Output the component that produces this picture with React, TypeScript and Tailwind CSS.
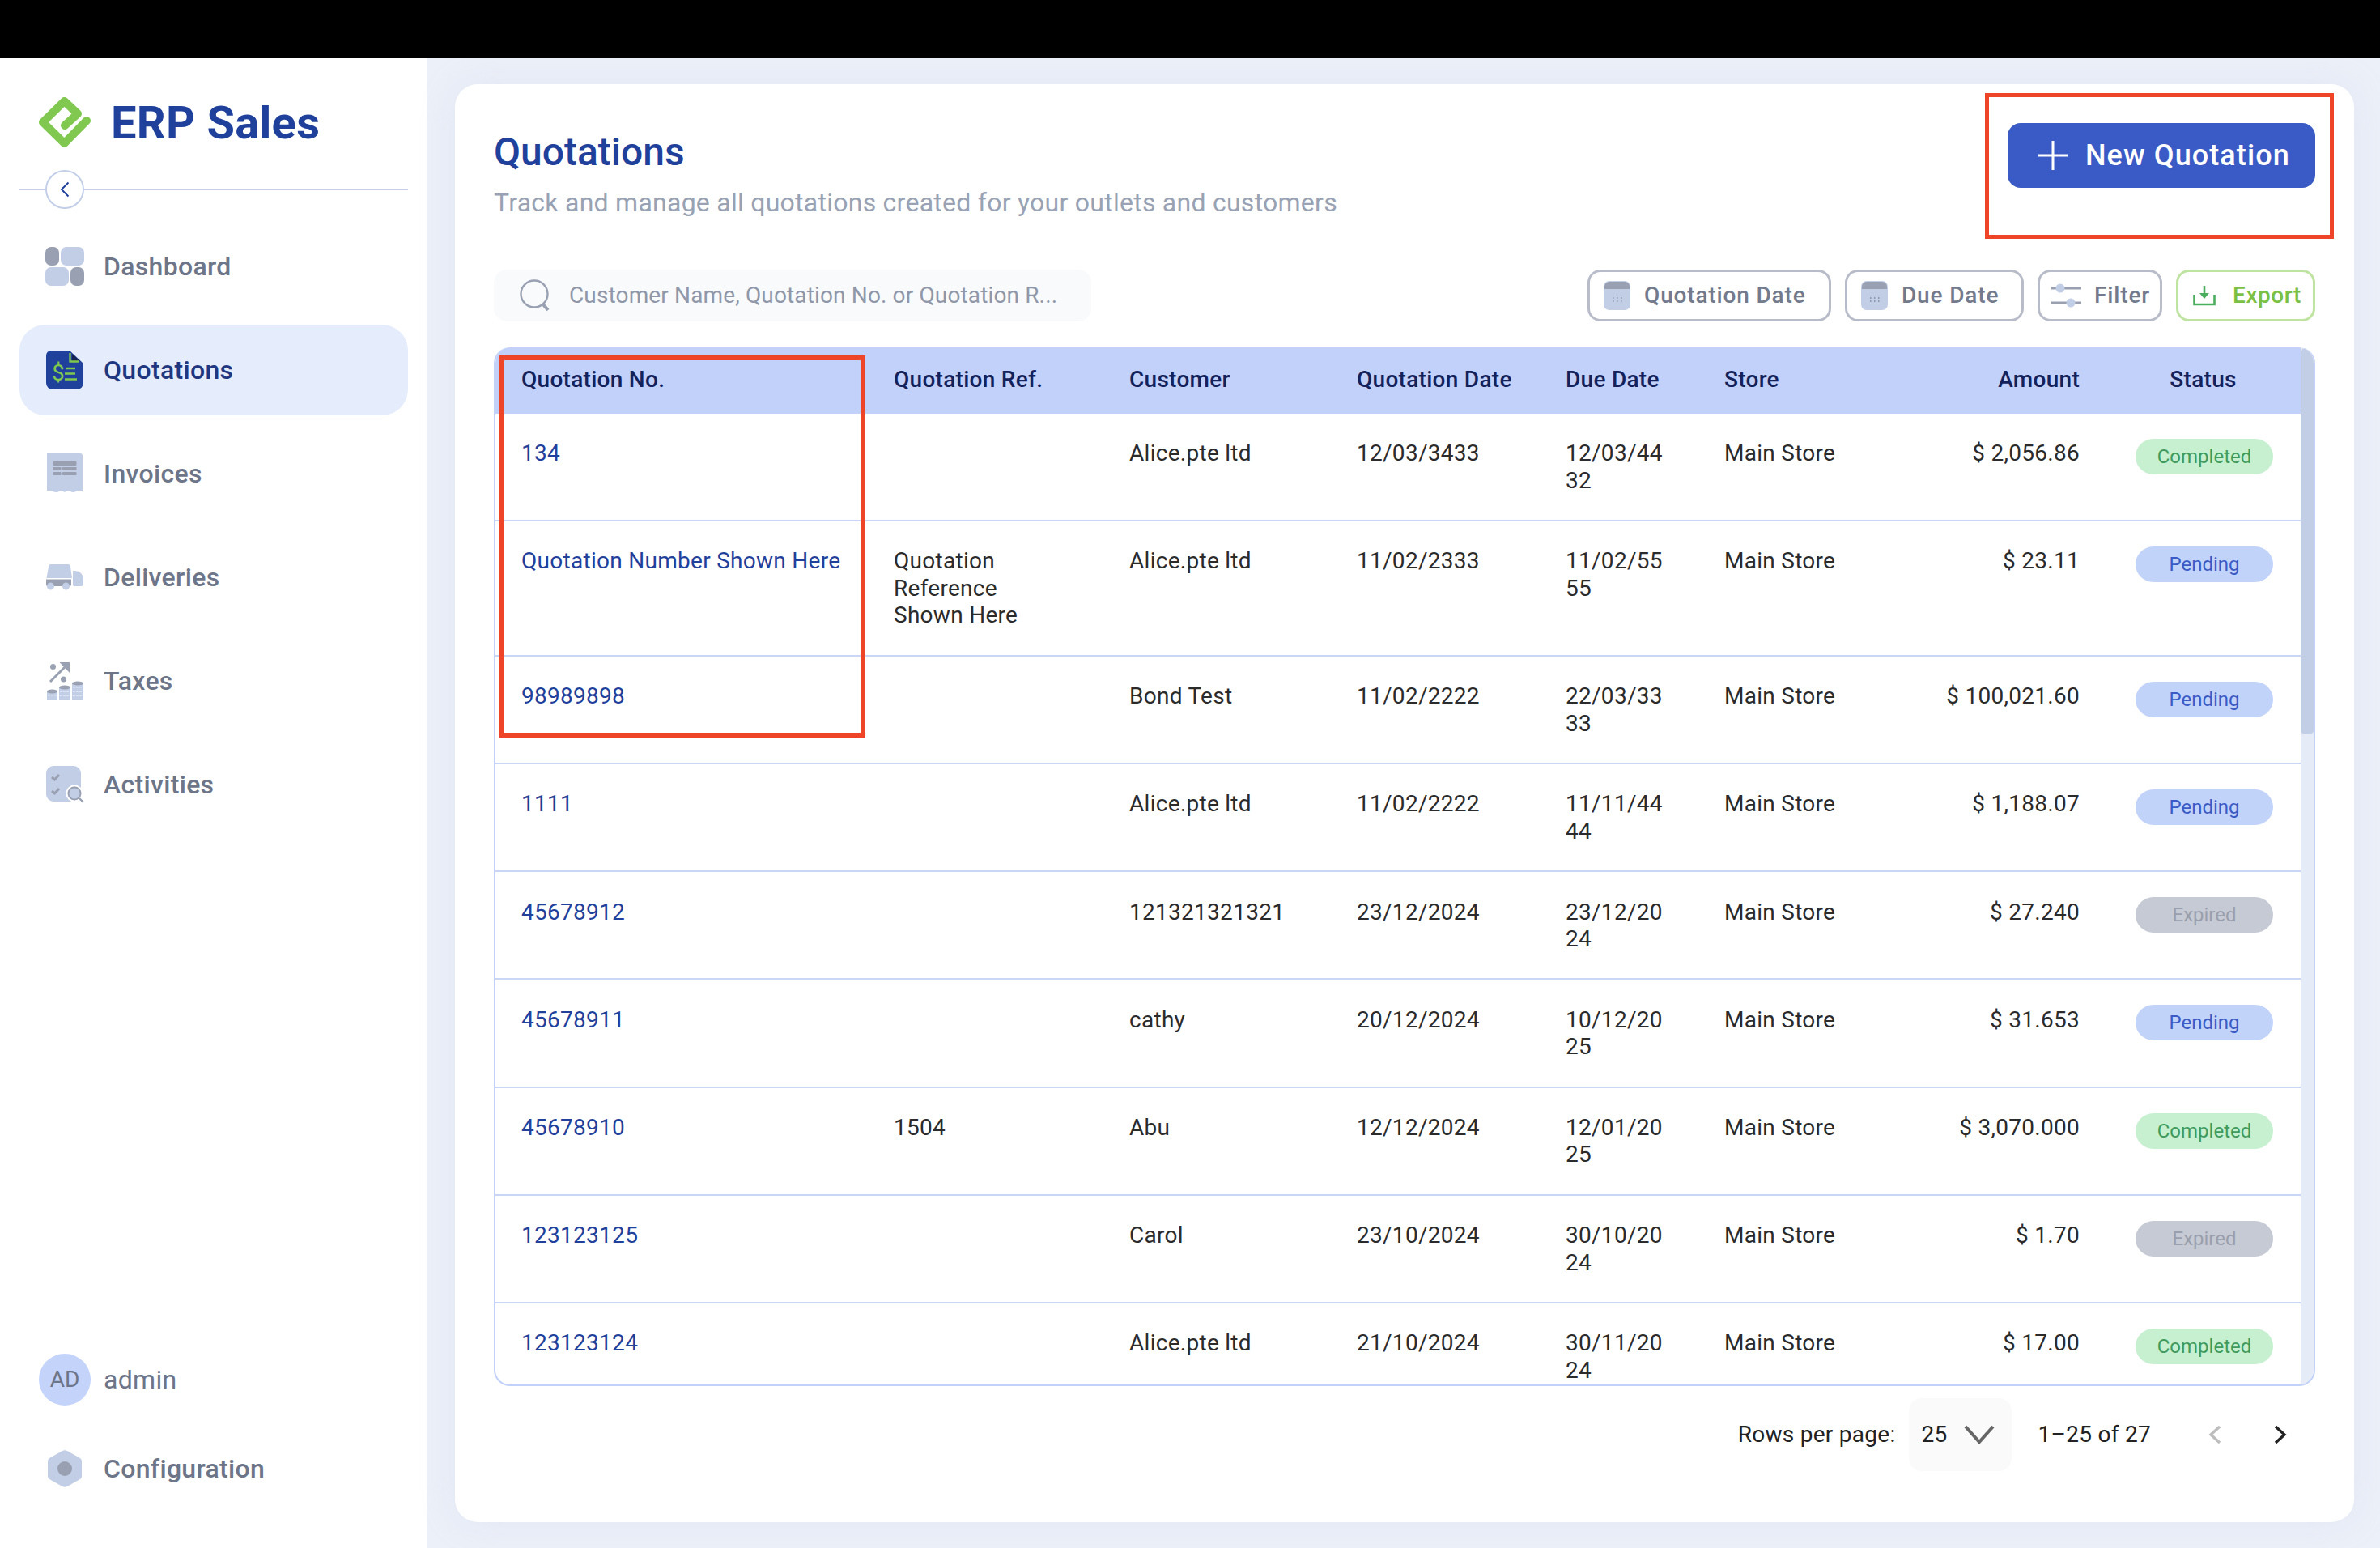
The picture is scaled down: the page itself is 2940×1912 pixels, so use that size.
// Quotations list page - ERP Sales
import type { ReactNode } from "react";

type Status = "Completed" | "Pending" | "Expired";

type Row = {
  no: string;
  ref: string;
  customer: string;
  date: string;
  due: string;
  store: string;
  amount: string;
  status: Status;
};

const rows: Row[] = [
  { no: "134", ref: "", customer: "Alice.pte ltd", date: "12/03/3433", due: "12/03/4432", store: "Main Store", amount: "$ 2,056.86", status: "Completed" },
  { no: "Quotation Number Shown Here", ref: "Quotation Reference Shown Here", customer: "Alice.pte ltd", date: "11/02/2333", due: "11/02/5555", store: "Main Store", amount: "$ 23.11", status: "Pending" },
  { no: "98989898", ref: "", customer: "Bond Test", date: "11/02/2222", due: "22/03/3333", store: "Main Store", amount: "$ 100,021.60", status: "Pending" },
  { no: "1111", ref: "", customer: "Alice.pte ltd", date: "11/02/2222", due: "11/11/4444", store: "Main Store", amount: "$ 1,188.07", status: "Pending" },
  { no: "45678912", ref: "", customer: "121321321321", date: "23/12/2024", due: "23/12/2024", store: "Main Store", amount: "$ 27.240", status: "Expired" },
  { no: "45678911", ref: "", customer: "cathy", date: "20/12/2024", due: "10/12/2025", store: "Main Store", amount: "$ 31.653", status: "Pending" },
  { no: "45678910", ref: "1504", customer: "Abu", date: "12/12/2024", due: "12/01/2025", store: "Main Store", amount: "$ 3,070.000", status: "Completed" },
  { no: "123123125", ref: "", customer: "Carol", date: "23/10/2024", due: "30/10/2024", store: "Main Store", amount: "$ 1.70", status: "Expired" },
  { no: "123123124", ref: "", customer: "Alice.pte ltd", date: "21/10/2024", due: "30/11/2024", store: "Main Store", amount: "$ 17.00", status: "Completed" },
];

const statusStyles: Record<Status, string> = {
  Completed: "bg-[#c7f0d1] text-[#3f9b5c]",
  Pending: "bg-[#c2d3fa] text-[#3a5bc5]",
  Expired: "bg-[#c6cad4] text-[#9a9fae]",
};

const LIGHT = "#c2cde6";
const GREY = "#98a0b1";

function LogoIcon() {
  return (
    <svg width="66" height="66" viewBox="0 0 66 66" fill="none">
      <path
        d="M60 30 L32.5 58 L6 32 L32.5 6 L49 21.5 L33 36"
        stroke="#80c84f"
        strokeWidth="10"
        strokeLinejoin="round"
        strokeLinecap="round"
      />
    </svg>
  );
}

function DashboardIcon() {
  return (
    <svg width="48" height="48" viewBox="0 0 48 48">
      <rect x="0" y="0" width="17" height="23" rx="7" fill={GREY} />
      <rect x="19" y="0" width="29" height="23" rx="7" fill={LIGHT} />
      <rect x="0" y="25" width="29" height="23" rx="7" fill={LIGHT} />
      <rect x="31" y="25" width="17" height="23" rx="7" fill={GREY} />
    </svg>
  );
}

function QuotationIcon() {
  return (
    <svg width="46" height="48" viewBox="0 0 46 48">
      <path d="M6 0 H29 L46 16 V40 a8 8 0 0 1 -8 8 H8 a8 8 0 0 1 -8 -8 V6 a6 6 0 0 1 6 -6 Z" fill="#1f419b" />
      <path d="M32 4 L42 13 H32 Z" fill="#1a2450" />
      <path d="M29.5 3 V13.5 H40" stroke="#80c84f" strokeWidth="2.4" fill="none" />
      <text x="7" y="37" fontSize="28" fill="#80c84f" fontFamily="Roboto, sans-serif">$</text>
      <path d="M24 22 H36 M23 28.5 H36 M23 35.5 H38" stroke="#80c84f" strokeWidth="2.6" />
    </svg>
  );
}

function InvoiceIcon() {
  return (
    <svg width="44" height="50" viewBox="0 0 44 50">
      <path d="M3 0 H41 a3 3 0 0 1 3 3 V47 q-4 -2 -8 0 t-7 0 q-4 -2 -7 1 q-4 -3 -7 -1 t-8 0 q-4 -2 -9 0 V3 a3 3 0 0 1 3 -3 Z" fill={LIGHT} />
      <rect x="7.5" y="9.5" width="29" height="6" rx="2" fill={GREY} />
      <rect x="7.5" y="17" width="10" height="4" fill={GREY} />
      <rect x="19" y="17" width="17.5" height="4" fill={GREY} />
      <rect x="7.5" y="23" width="10" height="4" rx="1" fill={GREY} />
      <rect x="19" y="23" width="17.5" height="4" rx="1" fill={GREY} />
    </svg>
  );
}

function DeliveryIcon() {
  return (
    <svg width="46" height="32" viewBox="0 0 46 32">
      <path d="M6 0 H27 a3 3 0 0 1 3 3 L32 17 H0.5 L3 3 a3 3 0 0 1 3 -3 Z" fill={LIGHT} />
      <path d="M0 18.5 H31 V25 a2 2 0 0 1 -2 2 H2 a2 2 0 0 1 -2 -2 Z" fill={GREY} />
      <path d="M33 8 H36 q10 1 10 11 V24 a3 3 0 0 1 -3 3 H35 a2 2 0 0 1 -2 -2 Z" fill={LIGHT} />
      <circle cx="5.5" cy="27" r="4.5" fill={LIGHT} />
      <circle cx="24.5" cy="27" r="4.5" fill={LIGHT} />
    </svg>
  );
}

function TaxIcon() {
  return (
    <svg width="45" height="46" viewBox="0 0 45 46">
      <circle cx="7.5" cy="5.5" r="3.5" fill={GREY} />
      <circle cx="20.5" cy="21" r="3.5" fill={GREY} />
      <path d="M4 24 L26 2" stroke={GREY} strokeWidth="3" />
      <path d="M15.5 0 H28 V13 Z" fill={GREY} />
      <rect x="0" y="36" width="13" height="10" fill={LIGHT} />
      <ellipse cx="6.5" cy="36" rx="6.5" ry="2.4" fill={GREY} />
      <rect x="15" y="31" width="14" height="15" fill={LIGHT} />
      <ellipse cx="22" cy="31" rx="7" ry="2.4" fill={GREY} />
      <rect x="31" y="26" width="14" height="20" fill={LIGHT} />
      <ellipse cx="38" cy="26" rx="7" ry="2.4" fill={GREY} />
      <path d="M1 41 H12 M16 36.5 H28 M16 41.5 H28 M32 31 H44 M32 36.5 H44 M32 41.5 H44" stroke="#e6ebf6" strokeWidth="0.8" strokeDasharray="3 1" />
    </svg>
  );
}

function ActivityIcon() {
  return (
    <svg width="47" height="46" viewBox="0 0 47 46">
      <rect x="0" y="0" width="43" height="44" rx="9" fill={LIGHT} />
      <path d="M7 14 L10.5 17 L16 11 M7 31 L10.5 34 L16 28" stroke={GREY} strokeWidth="3" fill="none" />
      <circle cx="35" cy="34" r="9.5" fill={LIGHT} stroke="#ffffff" strokeWidth="2" />
      <circle cx="35" cy="34" r="7.5" fill="none" stroke={GREY} strokeWidth="1.8" />
      <path d="M41 40 L46 45" stroke={GREY} strokeWidth="2.4" />
    </svg>
  );
}

function ConfigIcon() {
  return (
    <svg width="42" height="46" viewBox="0 0 42 46">
      <path d="M18 1 Q21 -0.5 24 1 L39 9.5 Q42 11 42 14 V32 Q42 35 39 36.5 L24 45 Q21 46.5 18 45 L3 36.5 Q0 35 0 32 V14 Q0 11 3 9.5 Z" fill={LIGHT} />
      <circle cx="21" cy="23" r="9" fill={GREY} />
    </svg>
  );
}

function SearchIcon() {
  return (
    <svg width="38" height="40" viewBox="0 0 38 40" fill="none">
      <circle cx="18" cy="18" r="16.5" stroke={GREY} strokeWidth="2.4" />
      <path d="M28 30 L35 38" stroke={GREY} strokeWidth="4" />
    </svg>
  );
}

function CalendarIcon() {
  return (
    <svg width="33" height="36" viewBox="0 0 33 36" className="shrink-0">
      <rect x="0" y="0" width="33" height="36" rx="7" fill={LIGHT} />
      <path d="M1 10 V7 a6 6 0 0 1 6 -6 H26 a6 6 0 0 1 6 6 V10 Z" fill={GREY} />
      <path d="M11 21 H12.5 M16 21 H17.5 M21 21 H22.5 M11 25 H12.5 M16 25 H17.5 M21 25 H22.5" stroke="#7f889b" strokeWidth="1.4" />
    </svg>
  );
}

function FilterIcon() {
  return (
    <svg width="37" height="30" viewBox="0 0 37 30" fill="none" className="shrink-0">
      <path d="M0 6 H37" stroke={GREY} strokeWidth="3" />
      <circle cx="11" cy="6" r="5.5" fill={LIGHT} />
      <path d="M0 24 H37" stroke={GREY} strokeWidth="3" />
      <circle cx="24" cy="24" r="5.5" fill={LIGHT} />
    </svg>
  );
}

function ExportIcon() {
  return (
    <svg width="28" height="25" viewBox="0 0 28 25" fill="none" className="shrink-0">
      <path d="M1.5 11 V23 H26.5 V11" stroke="#4bae5f" strokeWidth="2.6" />
      <path d="M14 0 V14" stroke="#4bae5f" strokeWidth="2.6" />
      <path d="M8 9 L14 16 L20 9 Z" fill="#4bae5f" />
    </svg>
  );
}

function NavItem({ icon, label, active }: { icon: ReactNode; label: string; active?: boolean }) {
  return (
    <div className={`flex h-[112px] items-center rounded-[32px] pl-[32px] ${active ? "bg-[#e5ecfb] text-[#1f3780]" : "text-[#6d7588]"}`}>
      <div className="flex h-[48px] w-[48px] shrink-0 items-center justify-center">{icon}</div>
      <span className="ml-[24px] text-[32px] font-medium tracking-[0.01em]">{label}</span>
    </div>
  );
}

function Sidebar() {
  return (
    <aside className="flex w-[528px] shrink-0 flex-col bg-white px-[24px]">
      <div className="flex h-[161px] items-start gap-[24px] pt-[47px] pl-[23px]">
        <LogoIcon />
        <span className="text-[56px] leading-[66px] font-bold tracking-[0.005em] text-[#1f419b]">ERP Sales</span>
      </div>
      {/* collapse handle sits on the divider */}
      <div className="relative h-[2px] bg-[#c3cfe8]">
        <div className="absolute top-[-23px] left-[32px] flex h-[48px] w-[48px] items-center justify-center rounded-full border-2 border-[#c3cfe8] bg-white">
          <svg width="12" height="20" viewBox="0 0 12 20" fill="none">
            <path d="M10.5 1.5 L2 10 L10.5 18.5" stroke="#1f419b" strokeWidth="2" />
          </svg>
        </div>
      </div>
      <nav className="mt-[38px] flex flex-col gap-[16px]">
        <NavItem icon={<DashboardIcon />} label="Dashboard" />
        <NavItem icon={<QuotationIcon />} label="Quotations" active />
        <NavItem icon={<InvoiceIcon />} label="Invoices" />
        <NavItem icon={<DeliveryIcon />} label="Deliveries" />
        <NavItem icon={<TaxIcon />} label="Taxes" />
        <NavItem icon={<ActivityIcon />} label="Activities" />
      </nav>
      <div className="mt-auto pb-[74px]">
        <div className="flex h-[64px] items-center">
          <div className="ml-[24px] flex h-[64px] w-[64px] items-center justify-center rounded-full bg-[#c3d3fa] text-[28px] text-[#6d7588]">AD</div>
          <span className="ml-[16px] text-[32px] tracking-[0.01em] text-[#6d7588]">admin</span>
        </div>
        <div className="mt-[54px] flex h-[48px] items-center pl-[32px] text-[#6d7588]">
          <div className="flex w-[48px] shrink-0 items-center justify-center"><ConfigIcon /></div>
          <span className="ml-[24px] text-[32px] font-medium tracking-[0.01em]">Configuration</span>
        </div>
      </div>
    </aside>
  );
}

function ToolButton({ icon, label, className }: { icon: ReactNode; label: string; className?: string }) {
  return (
    <button className={`flex h-[64px] items-center gap-[17px] rounded-[16px] border-[3px] border-[#b8bcc9] pl-[17px] text-[28px] font-medium tracking-[0.03em] text-[#737a8c] ${className ?? ""}`}>
      {icon}
      {label}
    </button>
  );
}

const thClass = "px-[32px] pb-[2px] text-left text-[28px] font-medium text-[#14225c] whitespace-nowrap";
const tdClass = "px-[32px] pt-[32.3px] pb-[31.9px] align-top border-b-2 border-[#c9d6f6]";

function QuotationTable() {
  return (
    <div className="flex h-[1283px] overflow-hidden rounded-[20px] border-2 border-t-0 border-[#c2d1f9]">
      <div className="min-w-0 flex-1 overflow-hidden">
        <table className="w-[2230px] table-fixed border-separate border-spacing-0 text-[28px] leading-[33.5px] tracking-[0.01em] text-[#2b2b2b]">
          <colgroup>
            <col className="w-[460px]" />
            <col className="w-[291px]" />
            <col className="w-[281px]" />
            <col className="w-[258px]" />
            <col className="w-[196px]" />
            <col className="w-[260px]" />
            <col className="w-[243px]" />
            <col className="w-[241px]" />
          </colgroup>
          <thead>
            <tr className="h-[82px] bg-[#c2d1f9]">
              <th className={thClass}>Quotation No.</th>
              <th className={thClass}>Quotation Ref.</th>
              <th className={thClass}>Customer</th>
              <th className={thClass}>Quotation Date</th>
              <th className={thClass}>Due Date</th>
              <th className={thClass}>Store</th>
              <th className={`${thClass} !text-right`}>Amount</th>
              <th className={`${thClass} !text-center`}>Status</th>
            </tr>
          </thead>
          <tbody>
            {rows.map((row) => (
              <tr key={row.no}>
                <td className={`${tdClass} whitespace-nowrap text-[#1f419b]`}>{row.no}</td>
                <td className={`${tdClass} !pr-[50px]`}>{row.ref}</td>
                <td className={tdClass}>{row.customer}</td>
                <td className={tdClass}>{row.date}</td>
                <td className={`${tdClass} break-all`}>{row.due}</td>
                <td className={tdClass}>{row.store}</td>
                <td className={`${tdClass} text-right`}>{row.amount}</td>
                <td className={`${tdClass} !px-0 !pt-[31px]`}>
                  <span className={`ml-[37px] block h-[44px] w-[170px] rounded-full text-center text-[24px] leading-[44px] tracking-normal ${statusStyles[row.status]}`}>
                    {row.status}
                  </span>
                </td>
              </tr>
            ))}
          </tbody>
        </table>
      </div>
      <div className="w-[16px] shrink-0 bg-[#e6ebf8]">
        <div className="h-[477px] rounded-t-[12px] rounded-b-[6px] bg-[#c2cde6]" />
      </div>
    </div>
  );
}

function Pagination() {
  return (
    <div className="mt-[15px] flex h-[90px] items-center justify-end text-[28px] tracking-[0.01em] text-[#222222]">
      <span>Rows per page:</span>
      <div className="ml-[16px] flex h-[90px] w-[127px] items-center rounded-[16px] bg-[#fafafa] pl-[16px]">
        <span>25</span>
        <svg className="ml-[20px]" width="38" height="24" viewBox="0 0 38 24" fill="none">
          <path d="M2 2 L19 21 L36 2" stroke="#666666" strokeWidth="4" />
        </svg>
      </div>
      <span className="ml-[33px]">1–25 of 27</span>
      <svg className="ml-[71px]" width="16" height="24" viewBox="0 0 16 24" fill="none">
        <path d="M14 2 L3 12 L14 22" stroke="#bdbdbd" strokeWidth="3.4" />
      </svg>
      <svg className="mr-[35px] ml-[65px]" width="16" height="24" viewBox="0 0 16 24" fill="none">
        <path d="M2 2 L13 12 L2 22" stroke="#222222" strokeWidth="3.4" />
      </svg>
    </div>
  );
}

export default function App() {
  return (
    <div className="flex h-[1912px] w-[2940px] flex-col overflow-hidden bg-[#eff1f6] [font-family:Roboto,sans-serif]">
      <div className="h-[72px] shrink-0 bg-black" />
      <div className="flex min-h-0 flex-1">
        <Sidebar />
        <main className="min-w-0 flex-1 bg-[#ecf0f8] pt-[32px] pr-[32px] pb-[32px] pl-[34px]">
          <section className="relative h-[1776px] rounded-[28px] bg-white pt-[48px] pr-[48px] pl-[48px] shadow-[0_0_40px_rgba(190,205,240,0.25)]">
            {/* title + primary action */}
            <div className="flex h-[181px] items-start justify-between">
              <div className="pt-[8px]">
                <h1 className="text-[48px] leading-[56px] font-medium text-[#1f419b]">Quotations</h1>
                <p className="mt-[17px] text-[32px] leading-[34px] tracking-[0.008em] text-[#98a2b3]">
                  Track and manage all quotations created for your outlets and customers
                </p>
              </div>
              <button className="flex h-[80px] w-[380px] items-center gap-[22px] rounded-[16px] bg-[#3a5bc5] pl-[38px] text-[36px] font-medium tracking-[0.03em] text-white">
                <svg width="36" height="36" viewBox="0 0 36 36" fill="none">
                  <path d="M18 0 V36 M0 18 H36" stroke="#ffffff" strokeWidth="3" />
                </svg>
                New Quotation
              </button>
            </div>

            {/* search + filters */}
            <div className="mb-[32px] flex items-center justify-between">
              <div className="flex h-[64px] w-[738px] items-center gap-[23px] rounded-[16px] bg-[#f9fafc] pl-[32px] text-[28px] text-[#8f97a8]">
                <SearchIcon />
                <span className="tracking-[0.005em]">Customer Name, Quotation No. or Quotation R...</span>
              </div>
              <div className="flex gap-[17px]">
                <ToolButton icon={<CalendarIcon />} label="Quotation Date" className="w-[301px]" />
                <ToolButton icon={<CalendarIcon />} label="Due Date" className="w-[221px]" />
                <ToolButton icon={<FilterIcon />} label="Filter" className="w-[154px] !gap-[16px] !pl-[14px]" />
                <button className="flex h-[64px] w-[172px] items-center gap-[21px] rounded-[16px] border-[3px] border-[#bfe3a0] pl-[18px] text-[28px] font-medium tracking-[0.02em] text-[#7ac143]">
                  <ExportIcon />
                  Export
                </button>
              </div>
            </div>

            <QuotationTable />
            <Pagination />

            {/* review annotations drawn over the screen */}
            <div className="absolute top-[11px] left-[1890px] h-[180px] w-[431px] border-[5px] border-[#ee4528]" />
            <div className="absolute top-[335px] left-[55px] h-[472px] w-[452px] border-[6px] border-[#ee4528]" />
          </section>
        </main>
      </div>
    </div>
  );
}
